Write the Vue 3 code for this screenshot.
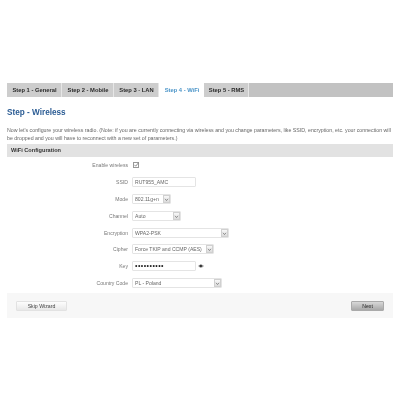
<template>
  <div class="page">
    <div class="tabs">
      <div
        v-for="tab in tabs"
        :key="tab.label"
        :class="['tab', { active: tab.active }]"
        :style="{ width: tab.width + 'px' }"
      >{{ tab.label }}</div>
    </div>

    <h2 class="title">Step - Wireless</h2>
    <p class="intro">Now let's configure your wireless radio. (Note: if you are currently connecting via wireless and you change parameters, like SSID, encryption, etc. your connection will be dropped and you will have to reconnect with a new set of parameters.)</p>

    <div class="panel-head">WiFi Configuration</div>

    <div class="form">
      <div class="row">
        <label>Enable wireless</label>
        <svg class="check" width="6" height="6" viewBox="0 0 6 6">
          <rect x="0.5" y="0.5" width="5" height="5" fill="#fff" stroke="#999" />
          <path d="M1.4 2.8 L2.7 4.2 L5.6 0.6" fill="none" stroke="#777" stroke-width="0.8" />
        </svg>
      </div>
      <div class="row">
        <label>SSID</label>
        <div class="input" style="width: 64px">RUT955_AMC</div>
      </div>
      <div v-for="s in selects" :key="s.label" class="row">
        <label>{{ s.label }}</label>
        <div class="select" :style="{ width: s.width + 'px' }">
          <span>{{ s.value }}</span>
          <i class="arrow">
            <svg width="5" height="7" viewBox="0 0 5 7"><path d="M1 2.8 L2.5 4.6 L4 2.8" fill="none" stroke="#777" stroke-width="0.8" /></svg>
          </i>
        </div>
      </div>
      <div class="row">
        <label>Key</label>
        <div class="input dots" style="width: 64px">••••••••••</div>
        <svg class="eye" width="6" height="4" viewBox="0 0 6 4">
          <path d="M0.2 2 C1.8 0 4.2 0 5.8 2 C4.2 4 1.8 4 0.2 2 Z" fill="#999" />
          <circle cx="2.8" cy="2" r="1.2" fill="#333" />
        </svg>
      </div>
      <div class="row">
        <label>Country Code</label>
        <div class="select" style="width: 90px">
          <span>PL - Poland</span>
          <i class="arrow">
            <svg width="5" height="7" viewBox="0 0 5 7"><path d="M1 2.8 L2.5 4.6 L4 2.8" fill="none" stroke="#777" stroke-width="0.8" /></svg>
          </i>
        </div>
      </div>
    </div>

    <div class="footer">
      <button class="btn skip">Skip Wizard</button>
      <button class="btn next">Next</button>
    </div>
  </div>
</template>

<script setup>
const tabs = [
  { label: 'Step 1 - General', width: 55 },
  { label: 'Step 2 - Mobile', width: 52 },
  { label: 'Step 3 - LAN', width: 45 },
  { label: 'Step 4 - WiFi', width: 45, active: true },
  { label: 'Step 5 - RMS', width: 45 }
]

const selects = [
  { label: 'Mode', value: '802.11g+n', width: 39 },
  { label: 'Channel', value: 'Auto', width: 49 },
  { label: 'Encryption', value: 'WPA2-PSK', width: 97 },
  { label: 'Cipher', value: 'Force TKIP and CCMP (AES)', width: 82 }
]
</script>

<style>
html, body {
  margin: 0;
  background: #fff;
}
</style>

<style scoped>
.page {
  width: 400px;
  height: 400px;
  box-sizing: border-box;
  padding: 83px 7px 0;
  font-family: "Liberation Sans", Arial, sans-serif;
  color: #666;
  overflow: hidden;
  filter: blur(0.3px);
}

.tabs {
  display: flex;
  height: 14px;
  background: #c2c2c2;
}

.tab {
  box-sizing: border-box;
  height: 14px;
  line-height: 14px;
  padding-left: 1px;
  text-align: center;
  font-size: 5.8px;
  font-weight: bold;
  color: #2a2a2a;
  background: #cdcdcd;
  border-right: 1px solid #e6e6e6;
  white-space: nowrap;
}

.tab.active {
  background: #fff;
  color: #4a94c8;
  border-right: 0;
}

.title {
  margin: 10px 0 0;
  font-size: 8.2px;
  line-height: 12px;
  font-weight: bold;
  color: #2b5c94;
}

.intro {
  margin: 7px 0 0;
  font-size: 5.25px;
  line-height: 8px;
  color: #666;
  width: 386px;
}

.panel-head {
  margin-top: 2px;
  height: 13px;
  line-height: 13px;
  padding-left: 4px;
  background: #e2e2e2;
  font-size: 5.6px;
  font-weight: bold;
  color: #333;
}

.form {
  height: 136px;
  box-sizing: border-box;
}

.row {
  display: flex;
  align-items: center;
  height: 16.8px;
  font-size: 5.1px;
}

.row label {
  width: 121px;
  margin-right: 4px;
  text-align: right;
  color: #777;
}

.check {
  margin-left: 1px;
}

.input,
.select {
  box-sizing: border-box;
  height: 10px;
  line-height: 8px;
  border: 1px solid #e4e4e4;
  border-radius: 1px;
  padding-left: 2px;
  background: #fff;
  color: #666;
  white-space: nowrap;
}

.select {
  display: flex;
  justify-content: space-between;
  overflow: hidden;
  padding-right: 0;
}

.arrow {
  display: block;
  flex: none;
  width: 7px;
  height: 8px;
  background: linear-gradient(#f8f8f8, #dcdcdc);
  border: 1px solid #d0d0d0;
  box-sizing: border-box;
  overflow: hidden;
}

.arrow svg {
  display: block;
}

.dots {
  color: #222;
  letter-spacing: 0.45px;
  font-size: 7px;
}

.eye {
  margin-left: 2px;
}

.footer {
  display: flex;
  justify-content: space-between;
  align-items: center;
  height: 25px;
  padding: 0 9px;
  background: #f7f7f7;
}

.btn {
  box-sizing: border-box;
  height: 10px;
  padding: 0;
  font: 5.2px/8px "Liberation Sans", Arial, sans-serif;
  border: 1px solid #e2e2e2;
  border-radius: 1px;
}

.skip {
  width: 51px;
  color: #444;
  background: linear-gradient(#fdfdfd, #e8e8e8);
}

.next {
  width: 33px;
  color: #222;
  background: linear-gradient(#d8d8d8, #a8a8a8);
  border-color: #aaa;
}
</style>
